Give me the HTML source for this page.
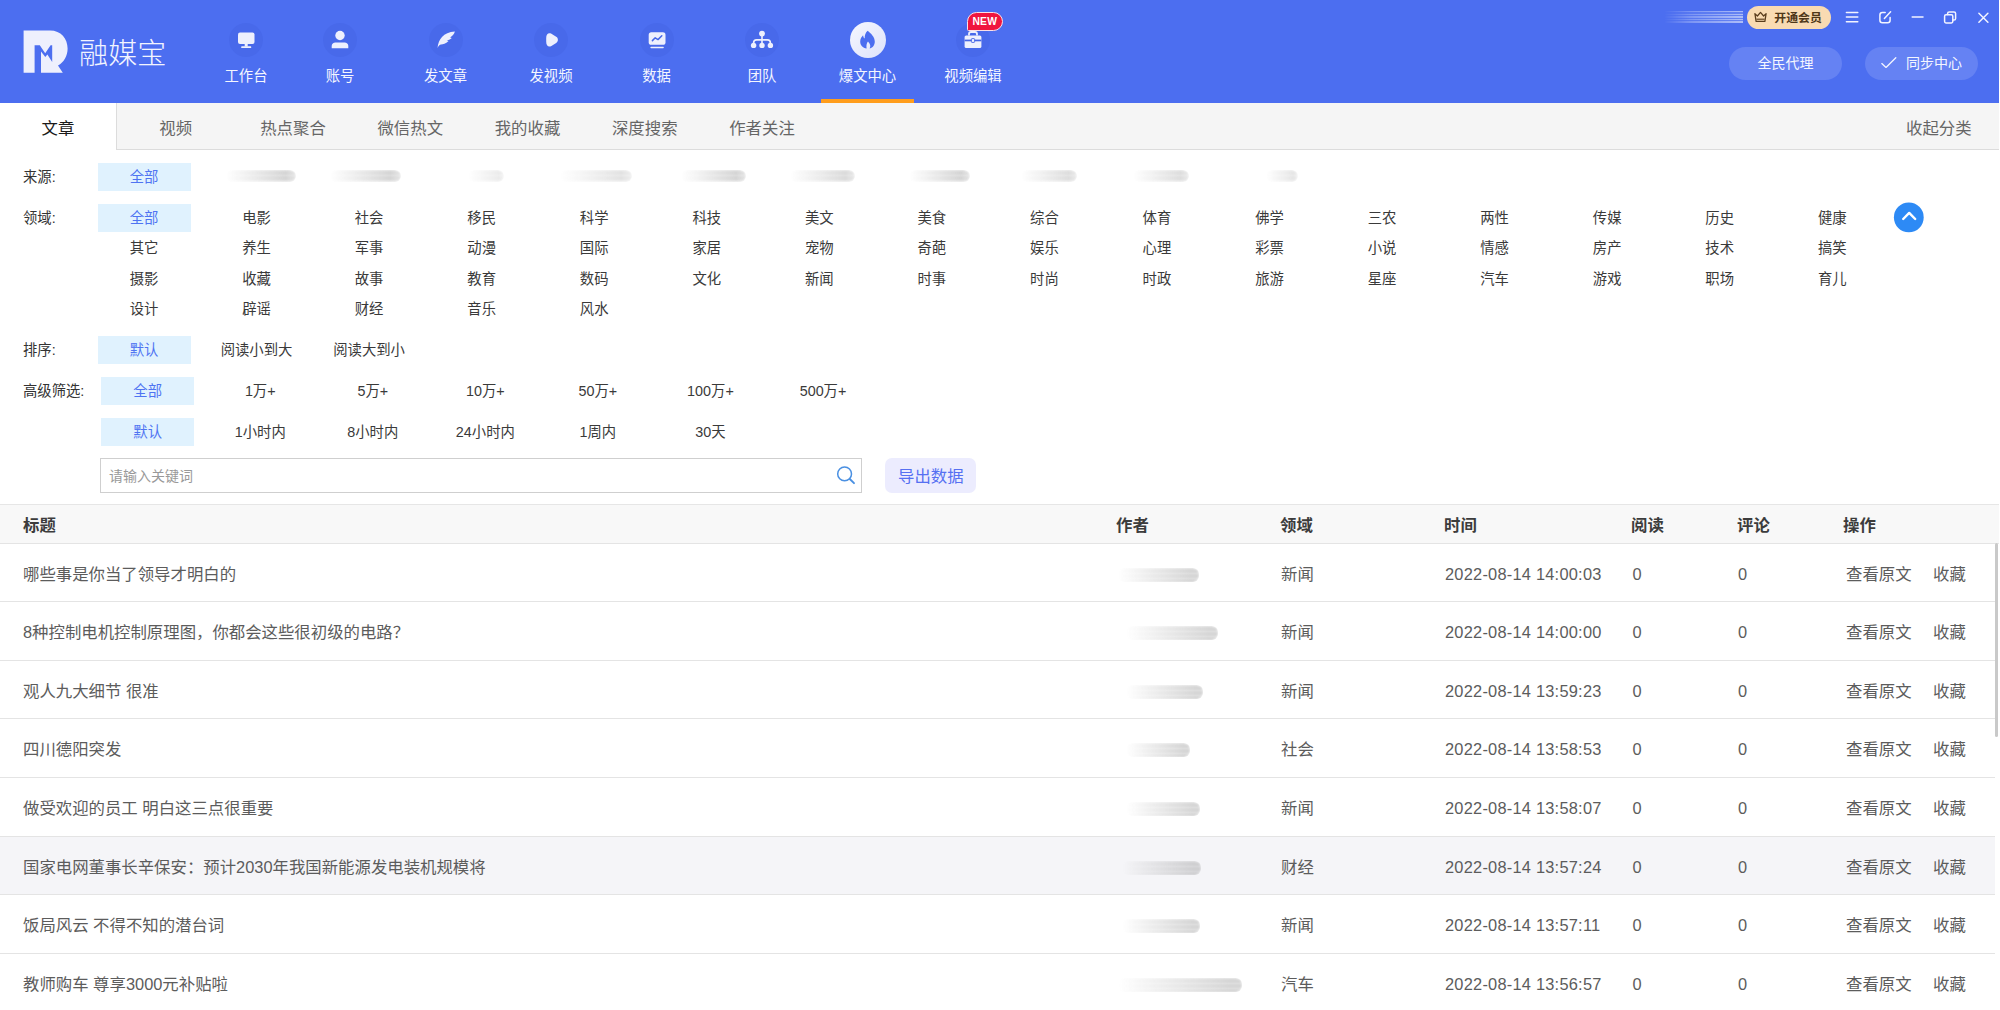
<!DOCTYPE html>
<html lang="zh-CN"><head><meta charset="utf-8"><title>融媒宝</title><style>
*{margin:0;padding:0;box-sizing:border-box}
html,body{width:2000px;height:1010px;overflow:hidden;background:#fff}
body{position:relative;font-family:"Liberation Sans","Noto Sans CJK SC",sans-serif;font-size:14.35px;color:#3a3a3a}
.abs{position:absolute}
#hdr{position:absolute;left:0;top:0;width:1999px;height:103px;background:#4c6ef0}
.nav{position:absolute;top:0;height:103px;width:120px;margin-left:-60px;text-align:center;color:#fff}
.nav .circ{position:absolute;left:50%;top:21.75px;width:36px;height:36px;margin-left:-18px}
.nav .circ i{position:absolute;left:1px;top:1px;width:34px;height:34px;border-radius:50%;background:#4869ea}
.nav .circ svg{position:absolute;left:0;top:0;width:36px;height:36px}
.nav .lbl{position:absolute;left:0;right:0;top:65.5px;line-height:20px;font-size:14.35px;color:#f4f6ff;white-space:nowrap}
.nav.on .circ i{left:0;top:0;width:36px;height:36px;background:linear-gradient(135deg,#f6f7fe 0%,#dde2fb 100%)}
#tabs{position:absolute;left:0;top:103px;width:1999px;height:47px;background:#f5f5f5;border-bottom:1px solid #dcdcdc}
.tab{position:absolute;top:0;height:46px;width:117px;line-height:50.6px;text-align:center;font-size:16.4px;color:#666;white-space:nowrap}
.tab.on{background:#fff;color:#1a1a1a;height:47px;border-right:1px solid #dcdcdc}
.flabel{position:absolute;left:23px;font-size:14.35px;line-height:28px;height:28px;color:#333;white-space:nowrap}
.fi{position:absolute;width:93px;height:28px;line-height:28px;text-align:center;font-size:14.35px;color:#3a3a3a;white-space:nowrap}
.fi.on{background:#e0f2fe;color:#4f74f2}
.blur{position:absolute;height:12px;border-radius:6px}
.th{position:absolute;top:505px;height:38px;line-height:40px;font-size:16.4px;font-weight:700;color:#3c3c3c;white-space:nowrap}
.row{position:absolute;left:0;width:1995px;height:59px;border-top:1px solid #e4e4e4}
.row.hov{background:#f5f5f8}
.td{position:absolute;top:0;height:58px;line-height:61px;font-size:16.4px;color:#5c5c5c;white-space:nowrap}
.num{letter-spacing:0.23px}
</style></head><body>
<div id="hdr">
<svg class="abs" style="left:20px;top:26px" width="56" height="52" viewBox="20 26 56 52">
<path fill="#eef0fd" d="M23.6 30.4 H50 C61 30.4 67.6 38.5 67.6 48.5 C67.6 56 64 62.3 58 65.6 L62.8 72.7 H41 V51.5 L45.3 57 L47.4 54.6 L52.2 62 V45.2 H50.6 L45.2 53.2 L39.8 45.2 H34.6 V72.7 H23.6 Z"/>
</svg>
<div class="abs" style="left:79px;top:30.6px;line-height:46px;font-size:29px;font-weight:300;color:#f2f4ff;letter-spacing:.15px;white-space:nowrap">融媒宝</div>
<div class="nav" style="left:246px"><div class="circ"><i></i><svg viewBox="0 0 36 36"><rect x="10" y="10.5" width="16.5" height="11.5" rx="2" fill="#eef0fd"/><rect x="16.7" y="22" width="3" height="2.6" fill="#eef0fd"/><rect x="13.2" y="24.3" width="10" height="1.8" rx=".6" fill="#eef0fd"/></svg></div><div class="lbl">工作台</div></div>
<div class="nav" style="left:340px"><div class="circ"><i></i><svg viewBox="0 0 36 36"><circle cx="18" cy="13.5" r="4.7" fill="#eef0fd"/><path d="M9.7 26.3 V24 C9.7 21.8 11.4 20.5 13.4 20.5 H22.6 C24.6 20.5 26.3 21.8 26.3 24 V26.3 Z" fill="#eef0fd"/></svg></div><div class="lbl">账号</div></div>
<div class="nav" style="left:445.5px"><div class="circ"><i></i><svg viewBox="0 0 36 36"><path d="M26.9 9.6 C21 10 17 11.8 14 15 C11.4 17.8 10 21.4 9.5 25.9 C10.6 23.6 11.6 22.8 13 22.5 C15 22.2 17.6 21.6 20.6 18.9 L18.8 18.5 C21.2 18 22.6 17.2 23.8 16 L22.1 15.4 C24.4 14.2 26 12.4 26.9 9.6 Z" fill="#eef0fd"/></svg></div><div class="lbl">发文章</div></div>
<div class="nav" style="left:551px"><div class="circ"><i></i><svg viewBox="0 0 36 36"><path d="M13.2 16 C13.2 12.4 15.2 10.4 18 11.6 L23.2 14.7 C25.5 16.1 25.5 19.5 23.2 20.9 L18 24.2 C15.2 25.4 13.2 23.4 13.2 19.8 Z" fill="#eef0fd"/></svg></div><div class="lbl">发视频</div></div>
<div class="nav" style="left:656.5px"><div class="circ"><i></i><svg viewBox="0 0 36 36"><rect x="9.7" y="10.3" width="16.8" height="12.5" rx="2.6" fill="#eef0fd"/><path d="M13.4 18.6 L16.2 15.8 L19 17.6 L22.8 13.8" stroke="#4768e8" stroke-width="1.5" fill="none" stroke-linecap="round" stroke-linejoin="round"/><rect x="11.4" y="24.7" width="13.4" height="1.5" rx=".7" fill="#eef0fd"/></svg></div><div class="lbl">数据</div></div>
<div class="nav" style="left:762px"><div class="circ"><i></i><svg viewBox="0 0 36 36"><circle cx="18" cy="11.6" r="2.9" fill="#eef0fd"/><circle cx="9.6" cy="23.4" r="2.7" fill="#eef0fd"/><circle cx="18" cy="23.4" r="2.7" fill="#eef0fd"/><circle cx="26.4" cy="23.4" r="2.7" fill="#eef0fd"/><path d="M18 13 V22 M9.6 22 V21 C9.6 19 10.8 17.9 12.6 17.9 H23.4 C25.2 17.9 26.4 19 26.4 21 V22" stroke="#eef0fd" stroke-width="1.6" fill="none"/></svg></div><div class="lbl">团队</div></div>
<div class="nav on" style="left:867.5px"><div class="circ"><i></i><svg viewBox="0 0 36 36"><path d="M17.6 8.8 C20.9 11.4 24.8 15 24.8 19.8 C24.8 23.6 22 26.2 19.6 26.4 C20.8 24.8 20.6 22.2 18 19.6 C16.6 21.4 16.2 23.2 16.6 26.4 C12.8 26 10.2 23.2 10.2 19.4 C10.2 16.6 11.7 14.6 13.1 13.2 C13.3 15 13.9 16 14.7 16.6 C14.5 13.2 15.5 10.8 17.6 8.8 Z" fill="#4c6ef0"/></svg></div><div class="lbl">爆文中心</div></div>
<div class="nav" style="left:973px"><div class="circ"><i></i><svg viewBox="0 0 36 36"><rect x="9.6" y="13.4" width="16.8" height="12.6" rx="1.6" fill="#eef0fd"/><path d="M14 13.4 V12 C14 10.8 14.8 10 16 10 H20 C21.2 10 22 10.8 22 12 V13.4" stroke="#eef0fd" stroke-width="1.8" fill="none"/><rect x="9.6" y="17.6" width="16.8" height="1.7" fill="#4767e6"/><rect x="16.4" y="16.6" width="3.2" height="3.8" rx=".6" fill="#eef0fd" stroke="#4767e6" stroke-width=".9"/></svg></div><div class="lbl">视频编辑</div></div>
<div class="abs" style="left:821.2px;top:99.4px;width:93.2px;height:3.6px;background:#ff9d1c"></div>
<div class="abs" style="left:967px;top:11.8px;width:35.6px;height:19.2px;background:#f0153f;border:1.4px solid #fbdfe6;border-radius:9.6px 9.6px 9.6px 1.5px;color:#fff;font-size:10.3px;font-weight:700;line-height:17.6px;text-align:center;letter-spacing:.2px">NEW</div>
<div class="abs" style="left:1664px;top:11px;width:79px;height:12px;background:repeating-linear-gradient(180deg,rgba(255,255,255,.55) 0 1.4px,rgba(255,255,255,.15) 1.4px 2.6px);-webkit-mask-image:linear-gradient(90deg,transparent 0%,rgba(0,0,0,.5) 35%,#000 100%);mask-image:linear-gradient(90deg,transparent 0%,rgba(0,0,0,.5) 35%,#000 100%);filter:blur(.5px)"></div>
<div class="abs" style="left:1746.5px;top:6.2px;width:84.5px;height:23px;border-radius:11.5px;background:#f9dbb2"></div>
<svg class="abs" style="left:1753px;top:10px" width="15" height="15" viewBox="0 0 15 15"><path d="M1.9 3.7 L4.4 6 L7.5 2.4 L10.6 6 L13.1 3.7 L11.9 11.4 H3.1 Z" fill="none" stroke="#5a3d1c" stroke-width="1.25" stroke-linejoin="round"/><path d="M3.4 9.2 H11.6" stroke="#5a3d1c" stroke-width="1.15"/></svg>
<div class="abs" style="left:1774.3px;top:7.2px;line-height:23px;font-size:11.9px;font-weight:700;color:#4f3718;white-space:nowrap">开通会员</div>
<svg class="abs" style="left:1840px;top:5px" width="156" height="26" viewBox="1840 5 156 26" fill="none" stroke="#f2f4ff" stroke-width="1.5" stroke-linecap="round" stroke-linejoin="round">
<path d="M1846.4 12.4 H1857.8 M1846.4 17.1 H1857.8 M1846.4 21.8 H1857.8"/>
<path d="M1885.2 12.6 H1882.4 C1880.9 12.6 1879.9 13.6 1879.9 15.1 V20.3 C1879.9 21.8 1880.9 22.8 1882.4 22.8 H1887.6 C1889.1 22.8 1890.1 21.8 1890.1 20.3 V17.6 M1884.4 18.4 L1890.6 11.8"/>
<path d="M1912.2 17.1 H1923"/>
<path d="M1947.6 14.6 V13.6 C1947.6 12.6 1948.2 12 1949.2 12 H1954 C1955 12 1955.6 12.6 1955.6 13.6 V18.4 C1955.6 19.4 1955 20 1954 20 H1953"/>
<rect x="1944.6" y="14.8" width="8.2" height="8.2" rx="1.4"/>
<path d="M1978.9 13.2 L1987.9 22.2 M1987.9 13.2 L1978.9 22.2"/>
</svg>
<div class="abs" style="left:1729px;top:47px;width:113px;height:33px;border-radius:16.5px;background:#6582f3;color:#f4f6ff;font-size:14px;line-height:32px;text-align:center">全民代理</div>
<div class="abs" style="left:1865px;top:47px;width:113px;height:33px;border-radius:16.5px;background:#6582f3"></div>
<svg class="abs" style="left:1879px;top:55px" width="20" height="16" viewBox="0 0 20 16"><path d="M2.8 8.6 L7 12.4 L16.8 2.8" fill="none" stroke="#f2f4ff" stroke-width="1.35" stroke-linecap="round" stroke-linejoin="round"/></svg>
<div class="abs" style="left:1906px;top:47px;line-height:32px;font-size:14px;color:#f4f6ff;white-space:nowrap">同步中心</div>
</div>
<div id="tabs">
<div class="tab on" style="left:0.0px">文章</div>
<div class="tab" style="left:117.25px">视频</div>
<div class="tab" style="left:234.5px">热点聚合</div>
<div class="tab" style="left:351.75px">微信热文</div>
<div class="tab" style="left:469.0px">我的收藏</div>
<div class="tab" style="left:586.25px">深度搜索</div>
<div class="tab" style="left:703.5px">作者关注</div>
<div class="abs" style="left:1906px;top:0;line-height:50.6px;font-size:16.4px;color:#666;white-space:nowrap">收起分类</div>
</div>
<div class="flabel" style="top:162.6px">来源:</div>
<div class="fi on" style="left:97.5px;top:162.6px">全部</div>
<div class="blur" style="left:226px;top:170.3px;width:70px;opacity:0.75;background:repeating-linear-gradient(180deg,rgba(120,120,120,.55) 0 1.3px,rgba(160,160,160,.22) 1.3px 2.5px);-webkit-mask-image:linear-gradient(90deg,transparent 0%,rgba(0,0,0,.35) 30%,#000 85%,rgba(0,0,0,.6) 100%);mask-image:linear-gradient(90deg,transparent 0%,rgba(0,0,0,.35) 30%,#000 85%,rgba(0,0,0,.6) 100%);filter:blur(.8px)"></div>
<div class="blur" style="left:330px;top:170.3px;width:71px;opacity:0.75;background:repeating-linear-gradient(180deg,rgba(120,120,120,.55) 0 1.3px,rgba(160,160,160,.22) 1.3px 2.5px);-webkit-mask-image:linear-gradient(90deg,transparent 0%,rgba(0,0,0,.35) 30%,#000 85%,rgba(0,0,0,.6) 100%);mask-image:linear-gradient(90deg,transparent 0%,rgba(0,0,0,.35) 30%,#000 85%,rgba(0,0,0,.6) 100%);filter:blur(.8px)"></div>
<div class="blur" style="left:468px;top:170.3px;width:36px;opacity:0.35;background:repeating-linear-gradient(180deg,rgba(120,120,120,.55) 0 1.3px,rgba(160,160,160,.22) 1.3px 2.5px);-webkit-mask-image:linear-gradient(90deg,transparent 0%,rgba(0,0,0,.35) 30%,#000 85%,rgba(0,0,0,.6) 100%);mask-image:linear-gradient(90deg,transparent 0%,rgba(0,0,0,.35) 30%,#000 85%,rgba(0,0,0,.6) 100%);filter:blur(.8px)"></div>
<div class="blur" style="left:560px;top:170.3px;width:72px;opacity:0.5;background:repeating-linear-gradient(180deg,rgba(120,120,120,.55) 0 1.3px,rgba(160,160,160,.22) 1.3px 2.5px);-webkit-mask-image:linear-gradient(90deg,transparent 0%,rgba(0,0,0,.35) 30%,#000 85%,rgba(0,0,0,.6) 100%);mask-image:linear-gradient(90deg,transparent 0%,rgba(0,0,0,.35) 30%,#000 85%,rgba(0,0,0,.6) 100%);filter:blur(.8px)"></div>
<div class="blur" style="left:681px;top:170.3px;width:65px;opacity:0.75;background:repeating-linear-gradient(180deg,rgba(120,120,120,.55) 0 1.3px,rgba(160,160,160,.22) 1.3px 2.5px);-webkit-mask-image:linear-gradient(90deg,transparent 0%,rgba(0,0,0,.35) 30%,#000 85%,rgba(0,0,0,.6) 100%);mask-image:linear-gradient(90deg,transparent 0%,rgba(0,0,0,.35) 30%,#000 85%,rgba(0,0,0,.6) 100%);filter:blur(.8px)"></div>
<div class="blur" style="left:790px;top:170.3px;width:65px;opacity:0.65;background:repeating-linear-gradient(180deg,rgba(120,120,120,.55) 0 1.3px,rgba(160,160,160,.22) 1.3px 2.5px);-webkit-mask-image:linear-gradient(90deg,transparent 0%,rgba(0,0,0,.35) 30%,#000 85%,rgba(0,0,0,.6) 100%);mask-image:linear-gradient(90deg,transparent 0%,rgba(0,0,0,.35) 30%,#000 85%,rgba(0,0,0,.6) 100%);filter:blur(.8px)"></div>
<div class="blur" style="left:909px;top:170.3px;width:61px;opacity:0.75;background:repeating-linear-gradient(180deg,rgba(120,120,120,.55) 0 1.3px,rgba(160,160,160,.22) 1.3px 2.5px);-webkit-mask-image:linear-gradient(90deg,transparent 0%,rgba(0,0,0,.35) 30%,#000 85%,rgba(0,0,0,.6) 100%);mask-image:linear-gradient(90deg,transparent 0%,rgba(0,0,0,.35) 30%,#000 85%,rgba(0,0,0,.6) 100%);filter:blur(.8px)"></div>
<div class="blur" style="left:1021px;top:170.3px;width:56px;opacity:0.6;background:repeating-linear-gradient(180deg,rgba(120,120,120,.55) 0 1.3px,rgba(160,160,160,.22) 1.3px 2.5px);-webkit-mask-image:linear-gradient(90deg,transparent 0%,rgba(0,0,0,.35) 30%,#000 85%,rgba(0,0,0,.6) 100%);mask-image:linear-gradient(90deg,transparent 0%,rgba(0,0,0,.35) 30%,#000 85%,rgba(0,0,0,.6) 100%);filter:blur(.8px)"></div>
<div class="blur" style="left:1133px;top:170.3px;width:56px;opacity:0.6;background:repeating-linear-gradient(180deg,rgba(120,120,120,.55) 0 1.3px,rgba(160,160,160,.22) 1.3px 2.5px);-webkit-mask-image:linear-gradient(90deg,transparent 0%,rgba(0,0,0,.35) 30%,#000 85%,rgba(0,0,0,.6) 100%);mask-image:linear-gradient(90deg,transparent 0%,rgba(0,0,0,.35) 30%,#000 85%,rgba(0,0,0,.6) 100%);filter:blur(.8px)"></div>
<div class="blur" style="left:1266px;top:170.3px;width:32px;opacity:0.45;background:repeating-linear-gradient(180deg,rgba(120,120,120,.55) 0 1.3px,rgba(160,160,160,.22) 1.3px 2.5px);-webkit-mask-image:linear-gradient(90deg,transparent 0%,rgba(0,0,0,.35) 30%,#000 85%,rgba(0,0,0,.6) 100%);mask-image:linear-gradient(90deg,transparent 0%,rgba(0,0,0,.35) 30%,#000 85%,rgba(0,0,0,.6) 100%);filter:blur(.8px)"></div>
<div class="flabel" style="top:203.6px">领域:</div>
<div class="fi on" style="left:97.5px;top:203.6px">全部</div>
<div class="fi" style="left:210.05px;top:203.6px">电影</div>
<div class="fi" style="left:322.6px;top:203.6px">社会</div>
<div class="fi" style="left:435.15px;top:203.6px">移民</div>
<div class="fi" style="left:547.7px;top:203.6px">科学</div>
<div class="fi" style="left:660.25px;top:203.6px">科技</div>
<div class="fi" style="left:772.8px;top:203.6px">美文</div>
<div class="fi" style="left:885.35px;top:203.6px">美食</div>
<div class="fi" style="left:997.9px;top:203.6px">综合</div>
<div class="fi" style="left:1110.45px;top:203.6px">体育</div>
<div class="fi" style="left:1223.0px;top:203.6px">佛学</div>
<div class="fi" style="left:1335.55px;top:203.6px">三农</div>
<div class="fi" style="left:1448.1px;top:203.6px">两性</div>
<div class="fi" style="left:1560.65px;top:203.6px">传媒</div>
<div class="fi" style="left:1673.2px;top:203.6px">历史</div>
<div class="fi" style="left:1785.75px;top:203.6px">健康</div>
<div class="fi" style="left:97.5px;top:234.1px">其它</div>
<div class="fi" style="left:210.05px;top:234.1px">养生</div>
<div class="fi" style="left:322.6px;top:234.1px">军事</div>
<div class="fi" style="left:435.15px;top:234.1px">动漫</div>
<div class="fi" style="left:547.7px;top:234.1px">国际</div>
<div class="fi" style="left:660.25px;top:234.1px">家居</div>
<div class="fi" style="left:772.8px;top:234.1px">宠物</div>
<div class="fi" style="left:885.35px;top:234.1px">奇葩</div>
<div class="fi" style="left:997.9px;top:234.1px">娱乐</div>
<div class="fi" style="left:1110.45px;top:234.1px">心理</div>
<div class="fi" style="left:1223.0px;top:234.1px">彩票</div>
<div class="fi" style="left:1335.55px;top:234.1px">小说</div>
<div class="fi" style="left:1448.1px;top:234.1px">情感</div>
<div class="fi" style="left:1560.65px;top:234.1px">房产</div>
<div class="fi" style="left:1673.2px;top:234.1px">技术</div>
<div class="fi" style="left:1785.75px;top:234.1px">搞笑</div>
<div class="fi" style="left:97.5px;top:264.5px">摄影</div>
<div class="fi" style="left:210.05px;top:264.5px">收藏</div>
<div class="fi" style="left:322.6px;top:264.5px">故事</div>
<div class="fi" style="left:435.15px;top:264.5px">教育</div>
<div class="fi" style="left:547.7px;top:264.5px">数码</div>
<div class="fi" style="left:660.25px;top:264.5px">文化</div>
<div class="fi" style="left:772.8px;top:264.5px">新闻</div>
<div class="fi" style="left:885.35px;top:264.5px">时事</div>
<div class="fi" style="left:997.9px;top:264.5px">时尚</div>
<div class="fi" style="left:1110.45px;top:264.5px">时政</div>
<div class="fi" style="left:1223.0px;top:264.5px">旅游</div>
<div class="fi" style="left:1335.55px;top:264.5px">星座</div>
<div class="fi" style="left:1448.1px;top:264.5px">汽车</div>
<div class="fi" style="left:1560.65px;top:264.5px">游戏</div>
<div class="fi" style="left:1673.2px;top:264.5px">职场</div>
<div class="fi" style="left:1785.75px;top:264.5px">育儿</div>
<div class="fi" style="left:97.5px;top:294.9px">设计</div>
<div class="fi" style="left:210.05px;top:294.9px">辟谣</div>
<div class="fi" style="left:322.6px;top:294.9px">财经</div>
<div class="fi" style="left:435.15px;top:294.9px">音乐</div>
<div class="fi" style="left:547.7px;top:294.9px">风水</div>
<svg class="abs" style="left:1893px;top:202px" width="31" height="31" viewBox="0 0 31 31"><circle cx="15.8" cy="15.4" r="14.9" fill="#2d8af5"/><path d="M10.2 17 L16.2 10.9 L22.2 17" fill="none" stroke="#fff" stroke-width="2.4" stroke-linecap="round" stroke-linejoin="round"/></svg>
<div class="flabel" style="top:336px">排序:</div>
<div class="fi on" style="left:97.5px;top:336px">默认</div>
<div class="fi" style="left:210.05px;top:336px">阅读小到大</div>
<div class="fi" style="left:322.6px;top:336px">阅读大到小</div>
<div class="flabel" style="top:377px">高级筛选:</div>
<div class="fi on" style="left:101.2px;top:377px">全部</div>
<div class="fi" style="left:213.75px;top:377px">1万+</div>
<div class="fi" style="left:326.3px;top:377px">5万+</div>
<div class="fi" style="left:438.85px;top:377px">10万+</div>
<div class="fi" style="left:551.4px;top:377px">50万+</div>
<div class="fi" style="left:663.95px;top:377px">100万+</div>
<div class="fi" style="left:776.5px;top:377px">500万+</div>
<div class="fi on" style="left:101.2px;top:417.7px">默认</div>
<div class="fi" style="left:213.75px;top:417.7px">1小时内</div>
<div class="fi" style="left:326.3px;top:417.7px">8小时内</div>
<div class="fi" style="left:438.85px;top:417.7px">24小时内</div>
<div class="fi" style="left:551.4px;top:417.7px">1周内</div>
<div class="fi" style="left:663.95px;top:417.7px">30天</div>
<div class="abs" style="left:99.5px;top:458px;width:762.5px;height:35px;border:1px solid #cfcfcf;background:#fff"></div>
<div class="abs" style="left:109px;top:458px;line-height:36px;font-size:14px;color:#999;white-space:nowrap">请输入关键词</div>
<svg class="abs" style="left:834px;top:463px" width="24" height="24" viewBox="0 0 24 24"><circle cx="10.6" cy="10.9" r="6.9" fill="none" stroke="#4a90e2" stroke-width="1.5"/><path d="M15.8 16 L20 20.2" stroke="#4a90e2" stroke-width="1.9" stroke-linecap="round"/></svg>
<div class="abs" style="left:885.2px;top:458.2px;width:91.2px;height:34.4px;border-radius:7px;background:#ececfe;color:#5670f2;font-size:16.4px;line-height:36px;text-align:center;white-space:nowrap">导出数据</div>
<div class="abs" style="left:0;top:504px;width:1999px;height:40px;background:#f8f8f8;border-top:1px solid #e6e6e6;border-bottom:1px solid #e6e6e6"></div>
<div class="th" style="left:23px">标题</div>
<div class="th" style="left:1116px">作者</div>
<div class="th" style="left:1280px">领域</div>
<div class="th" style="left:1444px">时间</div>
<div class="th" style="left:1631px">阅读</div>
<div class="th" style="left:1737px">评论</div>
<div class="th" style="left:1843px">操作</div>
<div class="row" style="top:543px">
<div class="td" style="left:23px">哪些事是你当了领导才明白的</div>
<div class="blur" style="left:1118px;top:24px;width:81px;height:14px;opacity:.62;background:repeating-linear-gradient(180deg,rgba(110,110,110,.6) 0 1.3px,rgba(160,160,160,.25) 1.3px 2.5px);-webkit-mask-image:linear-gradient(90deg,transparent 0%,rgba(0,0,0,.35) 30%,#000 90%);mask-image:linear-gradient(90deg,transparent 0%,rgba(0,0,0,.35) 30%,#000 90%);filter:blur(.8px)"></div>
<div class="td" style="left:1281px">新闻</div>
<div class="td num" style="left:1445px">2022-08-14 14:00:03</div>
<div class="td num" style="left:1632.5px">0</div>
<div class="td num" style="left:1738px">0</div>
<div class="td" style="left:1846px">查看原文</div>
<div class="td" style="left:1933px">收藏</div>
</div>
<div class="row" style="top:601px">
<div class="td" style="left:23px">8种控制电机控制原理图，你都会这些很初级的电路？</div>
<div class="blur" style="left:1126px;top:24px;width:92px;height:14px;opacity:.62;background:repeating-linear-gradient(180deg,rgba(110,110,110,.6) 0 1.3px,rgba(160,160,160,.25) 1.3px 2.5px);-webkit-mask-image:linear-gradient(90deg,transparent 0%,rgba(0,0,0,.35) 30%,#000 90%);mask-image:linear-gradient(90deg,transparent 0%,rgba(0,0,0,.35) 30%,#000 90%);filter:blur(.8px)"></div>
<div class="td" style="left:1281px">新闻</div>
<div class="td num" style="left:1445px">2022-08-14 14:00:00</div>
<div class="td num" style="left:1632.5px">0</div>
<div class="td num" style="left:1738px">0</div>
<div class="td" style="left:1846px">查看原文</div>
<div class="td" style="left:1933px">收藏</div>
</div>
<div class="row" style="top:660px">
<div class="td" style="left:23px">观人九大细节 很准</div>
<div class="blur" style="left:1126px;top:24px;width:77px;height:14px;opacity:.62;background:repeating-linear-gradient(180deg,rgba(110,110,110,.6) 0 1.3px,rgba(160,160,160,.25) 1.3px 2.5px);-webkit-mask-image:linear-gradient(90deg,transparent 0%,rgba(0,0,0,.35) 30%,#000 90%);mask-image:linear-gradient(90deg,transparent 0%,rgba(0,0,0,.35) 30%,#000 90%);filter:blur(.8px)"></div>
<div class="td" style="left:1281px">新闻</div>
<div class="td num" style="left:1445px">2022-08-14 13:59:23</div>
<div class="td num" style="left:1632.5px">0</div>
<div class="td num" style="left:1738px">0</div>
<div class="td" style="left:1846px">查看原文</div>
<div class="td" style="left:1933px">收藏</div>
</div>
<div class="row" style="top:718px">
<div class="td" style="left:23px">四川德阳突发</div>
<div class="blur" style="left:1126px;top:24px;width:64px;height:14px;opacity:.62;background:repeating-linear-gradient(180deg,rgba(110,110,110,.6) 0 1.3px,rgba(160,160,160,.25) 1.3px 2.5px);-webkit-mask-image:linear-gradient(90deg,transparent 0%,rgba(0,0,0,.35) 30%,#000 90%);mask-image:linear-gradient(90deg,transparent 0%,rgba(0,0,0,.35) 30%,#000 90%);filter:blur(.8px)"></div>
<div class="td" style="left:1281px">社会</div>
<div class="td num" style="left:1445px">2022-08-14 13:58:53</div>
<div class="td num" style="left:1632.5px">0</div>
<div class="td num" style="left:1738px">0</div>
<div class="td" style="left:1846px">查看原文</div>
<div class="td" style="left:1933px">收藏</div>
</div>
<div class="row" style="top:777px">
<div class="td" style="left:23px">做受欢迎的员工 明白这三点很重要</div>
<div class="blur" style="left:1126px;top:24px;width:74px;height:14px;opacity:.62;background:repeating-linear-gradient(180deg,rgba(110,110,110,.6) 0 1.3px,rgba(160,160,160,.25) 1.3px 2.5px);-webkit-mask-image:linear-gradient(90deg,transparent 0%,rgba(0,0,0,.35) 30%,#000 90%);mask-image:linear-gradient(90deg,transparent 0%,rgba(0,0,0,.35) 30%,#000 90%);filter:blur(.8px)"></div>
<div class="td" style="left:1281px">新闻</div>
<div class="td num" style="left:1445px">2022-08-14 13:58:07</div>
<div class="td num" style="left:1632.5px">0</div>
<div class="td num" style="left:1738px">0</div>
<div class="td" style="left:1846px">查看原文</div>
<div class="td" style="left:1933px">收藏</div>
</div>
<div class="row hov" style="top:836px">
<div class="td" style="left:23px">国家电网董事长辛保安：预计2030年我国新能源发电装机规模将</div>
<div class="blur" style="left:1122px;top:24px;width:79px;height:14px;opacity:.62;background:repeating-linear-gradient(180deg,rgba(110,110,110,.6) 0 1.3px,rgba(160,160,160,.25) 1.3px 2.5px);-webkit-mask-image:linear-gradient(90deg,transparent 0%,rgba(0,0,0,.35) 30%,#000 90%);mask-image:linear-gradient(90deg,transparent 0%,rgba(0,0,0,.35) 30%,#000 90%);filter:blur(.8px)"></div>
<div class="td" style="left:1281px">财经</div>
<div class="td num" style="left:1445px">2022-08-14 13:57:24</div>
<div class="td num" style="left:1632.5px">0</div>
<div class="td num" style="left:1738px">0</div>
<div class="td" style="left:1846px">查看原文</div>
<div class="td" style="left:1933px">收藏</div>
</div>
<div class="row" style="top:894px">
<div class="td" style="left:23px">饭局风云 不得不知的潜台词</div>
<div class="blur" style="left:1122px;top:24px;width:78px;height:14px;opacity:.62;background:repeating-linear-gradient(180deg,rgba(110,110,110,.6) 0 1.3px,rgba(160,160,160,.25) 1.3px 2.5px);-webkit-mask-image:linear-gradient(90deg,transparent 0%,rgba(0,0,0,.35) 30%,#000 90%);mask-image:linear-gradient(90deg,transparent 0%,rgba(0,0,0,.35) 30%,#000 90%);filter:blur(.8px)"></div>
<div class="td" style="left:1281px">新闻</div>
<div class="td num" style="left:1445px">2022-08-14 13:57:11</div>
<div class="td num" style="left:1632.5px">0</div>
<div class="td num" style="left:1738px">0</div>
<div class="td" style="left:1846px">查看原文</div>
<div class="td" style="left:1933px">收藏</div>
</div>
<div class="row" style="top:953px">
<div class="td" style="left:23px">教师购车 尊享3000元补贴啦</div>
<div class="blur" style="left:1118px;top:24px;width:124px;height:14px;opacity:.62;background:repeating-linear-gradient(180deg,rgba(110,110,110,.6) 0 1.3px,rgba(160,160,160,.25) 1.3px 2.5px);-webkit-mask-image:linear-gradient(90deg,transparent 0%,rgba(0,0,0,.35) 30%,#000 90%);mask-image:linear-gradient(90deg,transparent 0%,rgba(0,0,0,.35) 30%,#000 90%);filter:blur(.8px)"></div>
<div class="td" style="left:1281px">汽车</div>
<div class="td num" style="left:1445px">2022-08-14 13:56:57</div>
<div class="td num" style="left:1632.5px">0</div>
<div class="td num" style="left:1738px">0</div>
<div class="td" style="left:1846px">查看原文</div>
<div class="td" style="left:1933px">收藏</div>
</div>
<div class="abs" style="left:1995px;top:543px;width:3px;height:194px;background:#c9c9c9;border-radius:1.5px"></div>
</body></html>
